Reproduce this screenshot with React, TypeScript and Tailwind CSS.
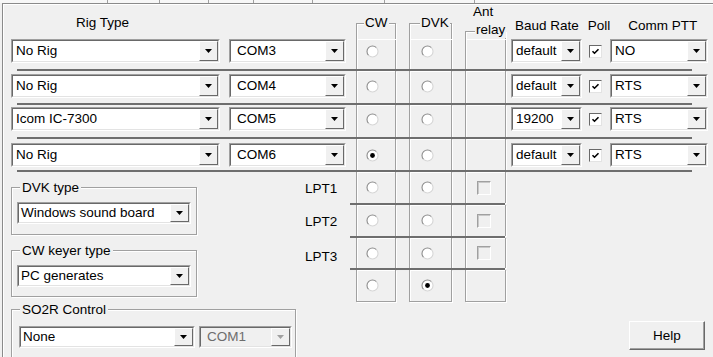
import React from "react";

const Arrow = ({ disabled }: { disabled?: boolean }) => (
  <svg width="7" height="4" viewBox="0 0 7 4">
    <path d="M0 0H7L3.5 4Z" fill={disabled ? "#a0a0a0" : "#000"} />
  </svg>
);

function Combo({
  w,
  text,
  disabled,
  inset = "pl-[3px]",
  h = "h-[24px]",
}: {
  w: string;
  text: string;
  disabled?: boolean;
  inset?: string;
  h?: string;
}) {
  return (
    <div
      className={`${w} ${h} flex shrink-0 border border-t-[#a0a0a0] border-l-[#a0a0a0] border-b-white border-r-white`}
    >
      <div
        className={`flex flex-1 min-w-0 border border-t-[#696969] border-l-[#696969] border-b-[#e3e3e3] border-r-[#e3e3e3] ${
          disabled ? "bg-[#f0f0f0] text-[#6d6d6d]" : "bg-white"
        }`}
      >
        <div className={`flex-1 min-w-0 flex items-center whitespace-nowrap overflow-hidden ${inset}`}>
          {text}
        </div>
        <div className="w-[19px] flex items-center justify-center bg-[#f0f0f0] border border-t-white border-l-white border-b-[#696969] border-r-[#696969]">
          <Arrow disabled={disabled} />
        </div>
      </div>
    </div>
  );
}

const Radio = ({ checked }: { checked?: boolean }) => (
  <svg width="13" height="13" viewBox="0 0 13 13">
    <circle cx="6.5" cy="6.5" r="5.5" fill="#fff" />
    <path d="M2.6 10.4A5.5 5.5 0 0 1 10.4 2.6" stroke="#8c8c8c" strokeWidth="1.1" fill="none" />
    <path d="M10.4 2.6A5.5 5.5 0 0 1 2.6 10.4" stroke="#d6d6d6" strokeWidth="1.1" fill="none" />
    {checked && <circle cx="6.5" cy="6.5" r="2.4" fill="#000" />}
  </svg>
);

const CheckBox = () => (
  <div className="w-[13px] h-[13px] bg-white border border-t-[#696969] border-l-[#696969] border-b-[#e3e3e3] border-r-[#e3e3e3] flex items-center justify-center">
    <svg width="9" height="9" viewBox="0 0 9 9">
      <path d="M1.5 4.2L3.5 6.2L7.5 2.2" stroke="#000" strokeWidth="1.6" fill="none" />
    </svg>
  </div>
);

const FlatCheck = () => (
  <div className="w-[14px] h-[14px] bg-[#f0f0f0] border border-t-[#a0a0a0] border-l-[#a0a0a0] border-b-white border-r-white shadow-[inset_1px_1px_0_#c8c8c8]" />
);

const etched = "border-[#a0a0a0] shadow-[inset_1px_1px_0_#fff,1px_1px_0_#fff]";

function GroupBox({
  className,
  label,
  children,
}: {
  className: string;
  label: string;
  children?: React.ReactNode;
}) {
  return (
    <div className={`relative shrink-0 border ${etched} ${className}`}>
      <span className="absolute -top-[8px] left-[8px] bg-[#f0f0f0] px-[2px] whitespace-nowrap">{label}</span>
      {children}
    </div>
  );
}

const Sep = ({ className }: { className: string }) => (
  <div className={`h-[2px] bg-[#6e6e6e] shrink-0 ${className}`} />
);

type RowProps = {
  pt: string;
  h: string;
  rig: string;
  com: string;
  cw?: boolean;
  baud: string;
  ptt: string;
};

function Row({ pt, h, rig, com, cw, baud, ptt }: RowProps) {
  return (
    <div className={`flex shrink-0 ${h}`}>
      <div className={`ml-[8px] ${pt}`}>
        <Combo w="w-[209px]" text={rig} />
      </div>
      <div className={`ml-[9px] ${pt}`}>
        <Combo w="w-[117px]" text={com} inset="pl-[6px]" />
      </div>
      <div className={`ml-[10px] w-[40px] border-x ${etched} ${pt}`}>
        <div className="h-[24px] flex items-center pl-[9px]">
          <Radio checked={cw} />
        </div>
      </div>
      <div className={`ml-[13px] w-[43px] border-x ${etched} ${pt}`}>
        <div className="h-[24px] flex items-center pl-[11px]">
          <Radio />
        </div>
      </div>
      <div className={`ml-[13px] w-[41px] border-x ${etched}`} />
      <div className={`ml-[5px] ${pt}`}>
        <Combo w="w-[71px]" text={baud} />
      </div>
      <div className={`ml-[7px] ${pt}`}>
        <div className="h-[24px] flex items-center">
          <CheckBox />
        </div>
      </div>
      <div className={`ml-[8px] ${pt}`}>
        <Combo w="w-[98px]" text={ptt} />
      </div>
    </div>
  );
}

function LptRow({
  h,
  label,
  labelPad = "",
  cw,
  dvk,
  check,
  last,
}: {
  h: string;
  label?: string;
  labelPad?: string;
  cw?: boolean;
  dvk?: boolean;
  check?: boolean;
  last?: boolean;
}) {
  const b = last ? "border-b" : "";
  return (
    <div className={`flex shrink-0 ${h}`}>
      <div className={`w-[53px] pl-[8px] flex items-center ${labelPad}`}>{label}</div>
      <div className={`ml-[6px] w-[40px] border-x ${b} ${etched} flex items-center pl-[9px]`}>
        <Radio checked={cw} />
      </div>
      <div className={`ml-[13px] w-[43px] border-x ${b} ${etched} flex items-center pl-[11px]`}>
        <Radio checked={dvk} />
      </div>
      <div className={`ml-[13px] w-[41px] border-x ${b} ${etched} flex items-center pl-[11px]`}>
        {check && <FlatCheck />}
      </div>
    </div>
  );
}

export default function App() {
  return (
    <div className="w-[713px] h-[357px] bg-[#f0f0f0] overflow-hidden font-['Liberation_Sans',Arial,sans-serif] text-[13.5px] leading-[16px] text-black">
      {/* tab strip remnant */}
      <div className="flex h-[3px] bg-[#f7f7f7]">
        <div className="w-[108px] border-r border-[#a0a0a0]" />
        <div className="w-[52px] border-r border-[#a0a0a0]" />
        <div className="w-[49px] border-r border-[#a0a0a0]" />
        <div className="w-[45px] border-r border-[#a0a0a0]" />
        <div className="w-[59px] border-r border-[#a0a0a0]" />
        <div className="w-[72px] border-r border-[#a0a0a0]" />
        <div className="w-[90px] border-r border-[#a0a0a0]" />
      </div>
      <div className="ml-[2px] h-[354px] border-l border-t border-[#8a8a8a] shadow-[inset_1px_1px_0_#fff] flex flex-col">
        {/* header */}
        <div className="flex h-[35px] shrink-0">
          <div className="ml-[8px] w-[209px] pl-[65px] pt-[11px]">Rig Type</div>
          <div className="ml-[9px] w-[117px]" />
          <div className="ml-[10px] w-[40px] flex flex-col">
            <div className="h-[19px] shrink-0" />
            <div className={`relative flex-1 border-x border-t ${etched}`}>
              <span className="absolute -top-[9px] left-[7px] bg-[#f0f0f0] px-[1px]">CW</span>
            </div>
          </div>
          <div className="ml-[13px] w-[43px] flex flex-col">
            <div className="h-[19px] shrink-0" />
            <div className={`relative flex-1 border-x border-t ${etched}`}>
              <span className="absolute -top-[9px] left-[10px] bg-[#f0f0f0] px-[1px]">DVK</span>
            </div>
          </div>
          <div className="relative ml-[13px] w-[41px] flex flex-col">
            <div className="h-[27px] shrink-0" />
            <div className={`flex-1 border-x border-t ${etched}`} />
            <span className="absolute top-[0px] left-[8px]">Ant</span>
            <span className="absolute top-[18px] left-[10px] bg-[#f0f0f0] px-[1px]">relay</span>
          </div>
          <div className="ml-[9px] pt-[14px] whitespace-nowrap">Baud Rate</div>
          <div className="ml-[9px] pt-[14px]">Poll</div>
          <div className="ml-[18px] pt-[14px] whitespace-nowrap">Comm PTT</div>
        </div>

        <Row pt="pt-[0px]" h="h-[30px]" rig="No Rig" com="COM3" baud="default" ptt="NO" />
        <Sep className="ml-[14px] w-[675px]" />
        <Row pt="pt-[3px]" h="h-[32px]" rig="No Rig" com="COM4" baud="default" ptt="RTS" />
        <Sep className="ml-[14px] w-[675px]" />
        <Row pt="pt-[2px]" h="h-[32px]" rig="Icom IC-7300" com="COM5" baud="19200" ptt="RTS" />
        <Sep className="ml-[14px] w-[675px]" />
        <Row pt="pt-[4px]" h="h-[31px]" rig="No Rig" com="COM6" cw baud="default" ptt="RTS" />
        <Sep className="ml-[14px] w-[675px]" />

        {/* lower section */}
        <div className="flex flex-1 min-h-0">
          <div className="ml-[8px] w-[286px] flex flex-col">
            <GroupBox className="mt-[15px] w-[186px] h-[48px]" label="DVK type">
              <div className="pl-[5px] pt-[14px]">
                <Combo w="w-[174px]" h="h-[22px]" text="Windows sound board" inset="pl-[2px]" />
              </div>
            </GroupBox>
            <GroupBox className="mt-[15px] w-[186px] h-[47px]" label="CW keyer type">
              <div className="pl-[5px] pt-[14px]">
                <Combo w="w-[174px]" h="h-[22px]" text="PC generates" inset="pl-[2px]" />
              </div>
            </GroupBox>
            <GroupBox className="mt-[12px] w-[285px] h-[70px]" label="SO2R Control">
              <div className="flex pl-[7px] pt-[16px] gap-[4px]">
                <Combo w="w-[176px]" h="h-[22px]" text="None" inset="pl-[2px]" />
                <Combo w="w-[93px]" h="h-[22px]" text="COM1" disabled inset="pl-[6px]" />
              </div>
            </GroupBox>
          </div>

          <div className="w-[209px] flex flex-col">
            <LptRow h="h-[31px]" label="LPT1" labelPad="pt-[2px]" check />
            <Sep className="ml-[53px] w-[155px]" />
            <LptRow h="h-[31px]" label="LPT2" labelPad="pt-[3px]" check />
            <Sep className="ml-[53px] w-[155px]" />
            <LptRow h="h-[30px]" label="LPT3" labelPad="pt-[7px]" check />
            <Sep className="ml-[53px] w-[155px]" />
            <LptRow h="h-[32px]" dvk last />
          </div>

          <div className="flex-1">
            <button className="mt-[149px] ml-[123px] w-[76px] h-[29px] bg-[#f0f0f0] border border-t-white border-l-white border-b-[#696969] border-r-[#696969] shadow-[inset_-1px_-1px_0_#a0a0a0] flex items-center justify-center">
              Help
            </button>
          </div>
        </div>
      </div>
    </div>
  );
}
